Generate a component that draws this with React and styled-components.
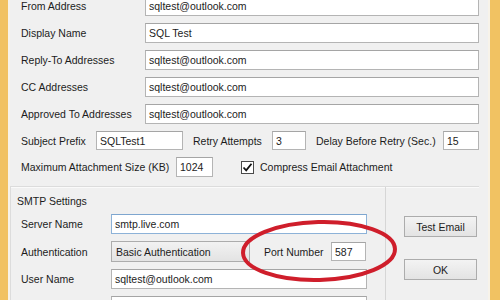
import React from 'react';
import styled, { createGlobalStyle } from 'styled-components';

const Global = createGlobalStyle`
  html, body { margin: 0; padding: 0; background: #f0f0f0; }
  * { box-sizing: border-box; }
`;

const Screen = styled.div`
  width: 500px;
  height: 300px;
  overflow: hidden;
  position: relative;
  display: flex;
  font-family: "Liberation Sans", Arial, sans-serif;
  font-size: 10.5px;
  color: #1c1c1c;
`;

const Stripe = styled.div`
  width: ${p => p.w}px;
  flex: none;
  background: #f1c262;
  border-${p => p.side}: 2px solid #f7f3ea;
`;

const Dialog = styled.div`
  flex: 1;
  min-width: 0;
  background: #f0f0f0;
  padding: 0 9px 0 0;
  display: flex;
  flex-direction: column;
`;

const TopForm = styled.div`
  display: flex;
  flex-direction: column;
  gap: 7px;
  margin-top: -4px;
  padding-left: 11px;
`;

const Row = styled.div`
  display: flex;
  align-items: center;
  height: ${p => p.h || 20}px;
`;

const Label = styled.div`
  width: ${p => p.w}px;
  margin-left: ${p => p.ml || 0}px;
  flex: none;
  white-space: nowrap;
`;

const Input = styled.div`
  height: ${p => p.h || 20}px;
  width: ${p => (p.w ? p.w + 'px' : 'auto')};
  flex: ${p => (p.w ? 'none' : 1)};
  background: #fff;
  border: 1px solid ${p => (p.focus ? '#8db2d8' : '#b4b4b4')};
  border-top-color: ${p => (p.focus ? '#7ea6cf' : '#a5a5a5')};
  padding-left: 3px;
  display: flex;
  align-items: center;
  white-space: nowrap;
  overflow: hidden;
`;

const Check = styled.div`
  width: 13px;
  height: 13px;
  margin-left: 28px;
  margin-right: 6px;
  border: 1px solid #4a4a4a;
  background: #fff;
  display: flex;
  align-items: center;
  justify-content: center;
  flex: none;
`;

const Separator = styled.div`
  margin-top: 9px;
  border-top: 1px solid #dcdcdc;
  box-shadow: 0 1px 0 #fafafa;
`;

const Bottom = styled.div`
  display: flex;
  align-items: flex-start;
`;

const Group = styled.div`
  width: 376px;
  border-left: 1px solid #dcdcdc;
  border-right: 1px solid #d6d6d6;
  padding: 7px 0 0 10px;
  display: flex;
  flex-direction: column;
  gap: 7px;
`;

const GroupTitle = styled.div`
  margin-left: -4px;
  margin-bottom: -1px;
  height: 14px;
  line-height: 14px;
`;

const Combo = styled.div`
  width: 139px;
  height: 21px;
  flex: none;
  border: 1px solid #acacac;
  background: linear-gradient(#f2f2f2, #e3e3e3);
  padding-left: 4px;
  display: flex;
  align-items: center;
`;

const Buttons = styled.div`
  display: flex;
  flex-direction: column;
  gap: 22px;
  margin-left: 18px;
  margin-top: 29px;
`;

const Button = styled.div`
  width: 73px;
  height: 21px;
  border: 1px solid #acacac;
  background: linear-gradient(#f3f3f3, #e3e3e3);
  display: flex;
  align-items: center;
  justify-content: center;
`;

const Circle = styled.svg`
  position: absolute;
  left: 239px;
  top: 218px;
  pointer-events: none;
`;

export default function App() {
  return (
    <Screen>
      <Global />
      <Stripe w={10} side="right" />
      <Dialog>
        <TopForm>
          <Row><Label w={124}>From Address</Label><Input>sqltest@outlook.com</Input></Row>
          <Row><Label w={124}>Display Name</Label><Input>SQL Test</Input></Row>
          <Row><Label w={124}>Reply-To Addresses</Label><Input>sqltest@outlook.com</Input></Row>
          <Row><Label w={124}>CC Addresses</Label><Input>sqltest@outlook.com</Input></Row>
          <Row><Label w={124}>Approved To Addresses</Label><Input>sqltest@outlook.com</Input></Row>
          <Row h={19}>
            <Label w={75}>Subject Prefix</Label>
            <Input w={87} h={19}>SQLTest1</Input>
            <Label w={79} ml={10}>Retry Attempts</Label>
            <Input w={34} h={19}>3</Input>
            <Label w={127} ml={10}>Delay Before Retry (Sec.)</Label>
            <Input w={36} h={19}>15</Input>
          </Row>
          <Row>
            <Label w={155}>Maximum Attachment Size (KB)</Label>
            <Input w={37}>1024</Input>
            <Check>
              <svg width="11" height="11" viewBox="0 0 11 11">
                <path d="M1.5 5.5 L4.2 8.3 L9.5 1.8" fill="none" stroke="#111" strokeWidth="1.8" />
              </svg>
            </Check>
            <Label w={140}>Compress Email Attachment</Label>
          </Row>
        </TopForm>
        <Separator />
        <Bottom>
          <Group>
            <GroupTitle>SMTP Settings</GroupTitle>
            <Row><Label w={90}>Server Name</Label><Input w={256} focus>smtp.live.com</Input></Row>
            <Row h={21}>
              <Label w={90}>Authentication</Label>
              <Combo>Basic Authentication</Combo>
              <Label w={67} ml={14}>Port Number</Label>
              <Input w={35} h={19}>587</Input>
            </Row>
            <Row><Label w={90}>User Name</Label><Input w={256}>sqltest@outlook.com</Input></Row>
            <Row><Label w={90}></Label><Input w={256}></Input></Row>
          </Group>
          <Buttons>
            <Button>Test Email</Button>
            <Button>OK</Button>
          </Buttons>
        </Bottom>
      </Dialog>
      <Stripe w={12} side="left" />
      <Circle width="160" height="66" viewBox="0 0 160 66">
        <ellipse cx="80" cy="33" rx="76" ry="29" fill="none" stroke="#cf1e2b" strokeWidth="4"
          transform="rotate(-1.5 80 33)" />
      </Circle>
    </Screen>
  );
}
